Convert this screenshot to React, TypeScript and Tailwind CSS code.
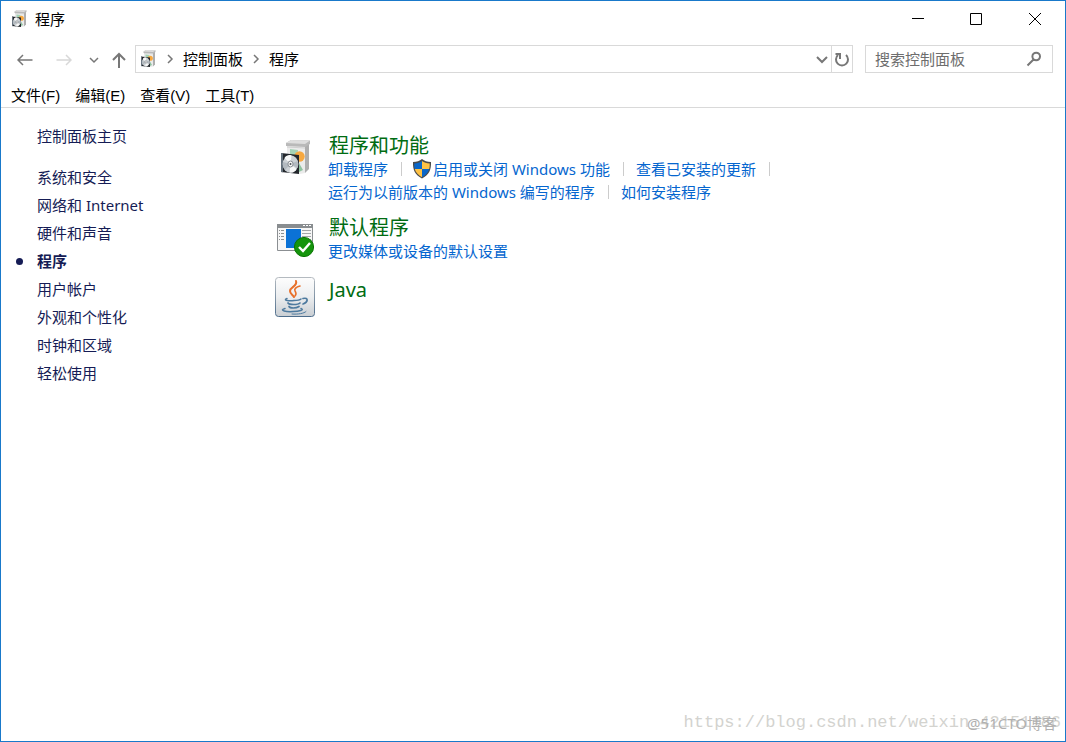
import type { ReactNode } from 'react';

type LinkItem = {
  label: string;
  shield?: boolean;
};

type Category = {
  title: string;
  icon: ReactNode;
  rows: LinkItem[][];
};

const menus = ['文件(F)', '编辑(E)', '查看(V)', '工具(T)'];

const sections = [
  '系统和安全',
  '网络和 Internet',
  '硬件和声音',
  '程序',
  '用户帐户',
  '外观和个性化',
  '时钟和区域',
  '轻松使用',
];

const currentSection = '程序';

const categories: Category[] = [
  {
    title: '程序和功能',
    icon: <ProgramsIcon className="h-10 w-10" />,
    rows: [
      [
        { label: '卸载程序' },
        { label: '启用或关闭 Windows 功能', shield: true },
        { label: '查看已安装的更新' },
      ],
      [{ label: '运行为以前版本的 Windows 编写的程序' }, { label: '如何安装程序' }],
    ],
  },
  {
    title: '默认程序',
    icon: <DefaultProgramsIcon />,
    rows: [[{ label: '更改媒体或设备的默认设置' }]],
  },
  { title: 'Java', icon: <JavaIcon />, rows: [] },
];

// Software box with a disc in front of it
function ProgramsIcon({ className }: { className: string }) {
  return (
    <svg viewBox="0 0 40 40" className={className} aria-hidden="true">
      <path d="M12 7h18v28l-5 1-13-2z" fill="#ebebeb" />
      <path d="m30 7 4-2v26l-4 4z" fill="#aeaeae" />
      <path d="m11 5 5-3 19 .500V6l-5 3-19-1z" fill="#b9b9b9" />
      <path d="m11 5 5-3 19 .500-5 3.500z" fill="#dedede" />
      <path d="M12 8.500l18 1v1l-18-1z" fill="#cfcfcf" />
      <path d="m15 11 8 1-1 9-7-2z" fill="#a5d3b6" />
      <circle cx="24.500" cy="18.500" r="5.200" fill="#f6a840" />
      <path d="m24 25 4 7-4 2z" fill="#8fc3a0" />
      <path d="m6 15 18 2v19L6 34z" fill="#23272c" />
      <path d="m6 15 2 .300v19L6 34z" fill="#66727d" />
      <ellipse cx="15.500" cy="26" rx="7.800" ry="8.800" fill="#cdd2d6" />
      <path d="m15.500 26-6-6c2-3 5-3.500 7-2.500zM15.500 26l6 5c-2 3-4 4-7 3.500z" fill="#f7f8f8" />
      <path d="m15.500 26-7.500-2c-.5 3 0 6 2 8zM15.500 26l7-3c1 2 1 5 0 7z" fill="#b3bac0" />
      <ellipse cx="15.500" cy="26" rx="2.600" ry="3" fill="#f4f4f4" stroke="#858b90" />
      <circle cx="15.500" cy="26" r="1" fill="#4d5257" />
    </svg>
  );
}

function DefaultProgramsIcon() {
  return (
    <svg viewBox="0 0 40 40" className="h-10 w-10" aria-hidden="true">
      <path d="M2.5 4.5h35v26h-35z" fill="#f7f7f7" stroke="#8b8f92" />
      <path d="M2 4h36v4H2z" fill="#898d90" />
      <path d="M28 5.5h2m1 0h2m1 0h2" stroke="#fff" />
      <path d="M4 10.500h5M4 13.500h5M4 16.500h5M4 19.500h5" stroke="#8b8f92" strokeDasharray="1 1 3" />
      <path d="M27 10.500h9M27 13.500h9M27 16.500h9M27 19.500h9" stroke="#a3a7aa" />
      <path d="M11 9h15v19H11z" fill="#0b72d6" />
      <circle cx="29" cy="27" r="9.6" fill="#14940c" stroke="#087500" />
      <path d="m24 27 4 4 7-8" fill="none" stroke="#fff" strokeWidth="2.4" />
    </svg>
  );
}

function JavaIcon() {
  return (
    <svg viewBox="0 0 40 40" className="h-10 w-10" aria-hidden="true">
      <defs>
        <linearGradient id="java-tile" x1="0" y1="0" x2="0" y2="1">
          <stop offset="0" stopColor="#fdfdfd" />
          <stop offset="0.5" stopColor="#eceef0" />
          <stop offset="1" stopColor="#c9ced3" />
        </linearGradient>
        <linearGradient id="java-edge" x1="0" y1="0" x2="0" y2="1">
          <stop offset="0" stopColor="#b4bac0" />
          <stop offset="1" stopColor="#4d6d8c" />
        </linearGradient>
      </defs>
      <rect x="0.5" y="0.5" width="39" height="39" rx="3" fill="url(#java-tile)" stroke="url(#java-edge)" />
      <g fill="none" strokeLinecap="round">
        <path d="M21 4c2 5-6 6-6 10 0 3 3 4 4 6" stroke="#e8702a" strokeWidth="2" />
        <path d="M25 9c-4 1-6 3-5 5 1 2 2 3 0 5" stroke="#e8702a" strokeWidth="1.6" />
        <path d="M12 21.500c-5 2 3 2.500 7 2 3 0 6-.500 7-1.500" stroke="#4d7a9f" strokeWidth="1.500" />
        <path d="M13 26c1 2 10 2 12 0M14 29.500c1 2 7 2 10 0" stroke="#4d7a9f" strokeWidth="1.700" />
        <path d="M28 21.500c6-1.500 5 4 0 5.500" stroke="#4d7a9f" strokeWidth="1.700" />
        <path d="M10 31.500c-7 2 2 3.500 8 3 6 0 12-1.500 8-3" stroke="#4d7a9f" strokeWidth="1.500" />
        <path d="M17 37c6 .5 12-.5 14-2.500" stroke="#4d7a9f" />
      </g>
    </svg>
  );
}

function ShieldIcon() {
  return (
    <svg viewBox="0 0 20 20" className="h-5 w-5 shrink-0" aria-hidden="true">
      <path d="M10 0c2.500 2 5 3 9 3 .3 8-2 13-9 16.500C3 16 .7 11 1 3c4 0 6.500-1 9-3z" fill="#4b4b4b" />
      <path d="M10 2v8H2.800C2.300 8.500 2.300 7 2.300 4.500 5.500 4.500 8 3.500 10 2z" fill="#0a66c8" />
      <path d="M10 2v8h7.200c.5-1.500.5-3 .5-5.500-3.200 0-5.700-1-7.700-2.500z" fill="#ffc244" />
      <path d="M2.800 10H10v8.200C6 16 3.700 13.500 2.800 10z" fill="#ffc244" />
      <path d="M17.200 10H10v8.200c4-2.200 6.300-4.700 7.200-8.200z" fill="#0a66c8" />
    </svg>
  );
}

function StrokeIcon({ d, className }: { d: string; className: string }) {
  return (
    <svg
      viewBox="0 0 16 16"
      className={['h-4 w-4 shrink-0', className].join(' ')}
      fill="none"
      stroke="currentColor"
      aria-hidden="true"
    >
      <path d={d} />
    </svg>
  );
}

function TitleBar() {
  return (
    <header className="flex h-9 items-center pl-2">
      <ProgramsIcon className="h-5 w-5" />
      <h1 className="ml-1.5 flex-1">程序</h1>
      <div className="flex h-full">
        <button type="button" aria-label="最小化" className="grid w-[58px] place-items-center">
          <svg viewBox="0 0 12 12" className="h-3 w-3" stroke="#000">
            <path d="M0 5.5h12" />
          </svg>
        </button>
        <button type="button" aria-label="最大化" className="grid w-[58px] place-items-center">
          <svg viewBox="0 0 12 12" className="h-3 w-3" fill="none" stroke="#000">
            <path d="M.5.5h11v11H.5z" />
          </svg>
        </button>
        <button type="button" aria-label="关闭" className="grid w-[60px] place-items-center">
          <svg viewBox="0 0 12 12" className="h-3 w-3" stroke="#000">
            <path d="m0 0 12 12M12 0 0 12" />
          </svg>
        </button>
      </div>
    </header>
  );
}

function AddressBar() {
  return (
    <div className="mt-2 flex h-7 items-center pr-3">
      <nav aria-label="导航" className="flex w-[134px] items-center pt-0.5 pl-4 text-[#777]">
        <button type="button" aria-label="后退">
          <StrokeIcon d="M.5 8h15M6 3 1 8l5 5" className="stroke-[1.5]" />
        </button>
        <button type="button" aria-label="前进" disabled className="ml-[23px] text-[#d8d8d8]">
          <StrokeIcon d="M.5 8h15M10 3l5 5-5 5" className="stroke-[1.5]" />
        </button>
        <button type="button" aria-label="最近的位置" className="ml-[14px]">
          <StrokeIcon d="m4 6 4 4 4-4" className="stroke-[1.5]" />
        </button>
        <button type="button" aria-label="上移" className="ml-[9px]">
          <StrokeIcon d="M8 16V2M2 8l6-6 6 6" className="stroke-2" />
        </button>
      </nav>
      <div className="flex h-full flex-1 items-center border border-[#d9d9d9] pl-0.5">
        <ProgramsIcon className="h-5 w-5" />
        <StrokeIcon d="m6 4 4 4-4 4" className="mx-1 stroke-[1.5] text-[#777]" />
        <a href="#control-panel" className="ml-px">控制面板</a>
        <StrokeIcon d="m6 4 4 4-4 4" className="mx-[5px] stroke-[1.5] text-[#777]" />
        <a href="#programs">程序</a>
        <button type="button" aria-label="以前的位置" className="mr-px ml-auto text-[#777]">
          <StrokeIcon d="m3 6 5 5 5-5" className="stroke-2" />
        </button>
        <button
          type="button"
          aria-label="刷新"
          className="grid h-full w-[21px] place-items-center border-l border-[#d9d9d9] text-[#777]"
        >
          <StrokeIcon d="M4 4a6 6 0 1 0 8 0M1.500 3H6v5" className="stroke-2" />
        </button>
      </div>
      <form className="ml-3 flex h-full w-[188px] items-center border border-[#d9d9d9] pr-2.5 pl-[9px]">
        <input
          type="text"
          aria-label="搜索控制面板"
          placeholder="搜索控制面板"
          className="min-w-0 flex-1 outline-none placeholder:text-[#6d6d6d]"
        />
        <button type="button" aria-label="搜索" className="text-[#777]">
          <StrokeIcon d="M14 5.500a3.800 3.800 0 1 1-7.600 0 3.800 3.800 0 0 1 7.600 0zM7.500 8.500l-6 6" className="stroke-2" />
        </button>
      </form>
    </div>
  );
}

function CategoryBlock({ title, icon, rows }: Category) {
  const hasLinks = rows.length > 0;

  return (
    <section className="flex gap-[13px]">
      <div className={hasLinks ? 'pt-[5px]' : 'pt-[3px]'}>{icon}</div>
      <div>
        <h2 className={['pt-0.5 pl-px text-xl text-[#006c12]', hasLinks ? 'leading-[22px]' : 'leading-7'].join(' ')}>
          <a href="#category">{title}</a>
        </h2>
        {rows.map((row) => (
          <ul key={row[0].label} className="flex h-[23px] items-center text-[#0566cf]">
            {row.map((item, index) => (
              <li key={item.label} className="flex items-center">
                {index > 0 && (
                  <span className={['ml-[13px] h-3.5 w-px bg-[#ccc]', item.shield ? 'mr-2.5' : 'mr-3'].join(' ')} />
                )}
                {item.shield && <ShieldIcon />}
                <a href="#task" className={item.shield ? 'ml-px' : ''}>{item.label}</a>
                {index === 2 && <span className="ml-[13px] h-3.5 w-px bg-[#ccc]" />}
              </li>
            ))}
          </ul>
        ))}
      </div>
    </section>
  );
}

export default function App() {
  return (
    <div className="relative flex min-h-screen flex-col border border-[#1979ca] bg-white font-['Noto_Sans','Noto_Sans_CJK_SC',sans-serif] text-[15px] leading-5 text-black">
      <TitleBar />
      <AddressBar />
      <nav aria-label="菜单" className="flex h-[35px] items-center gap-[15px] border-b border-[#d9d9d9] pt-3 pl-2.5">
        {menus.map((menu) => (
          <button key={menu} type="button" className="font-['Liberation_Sans','Noto_Sans_CJK_SC',sans-serif]">
            {menu}
          </button>
        ))}
      </nav>
      <div className="flex flex-1">
        <aside className="w-[274px] shrink-0 pt-[18px] pl-[15px] text-[#151c55]">
          <a href="#home" className="ml-[21px] block">控制面板主页</a>
          <ul className="mt-[17px]">
            {sections.map((section) => {
              const active = section === currentSection;

              return (
                <li key={section} className="flex h-7 items-center">
                  <span className="w-[21px]">
                    {active && <span className="block h-[7px] w-[7px] rounded-full bg-[#151c55]" />}
                  </span>
                  <a href="#section" className={active ? 'font-bold' : ''}>{section}</a>
                </li>
              );
            })}
          </ul>
        </aside>
        <main className="flex flex-col gap-3 pt-[25px]">
          {categories.map((category) => (
            <CategoryBlock key={category.title} {...category} />
          ))}
        </main>
      </div>
      <p className="absolute right-1 bottom-2 font-['Liberation_Mono',monospace] text-[17px] text-[#d3d3cf]">
        https://blog.csdn.net/weixin_42151186
      </p>
      <p className="absolute right-2 bottom-2 text-[#b0b0b0]">@51CTO博客</p>
    </div>
  );
}
